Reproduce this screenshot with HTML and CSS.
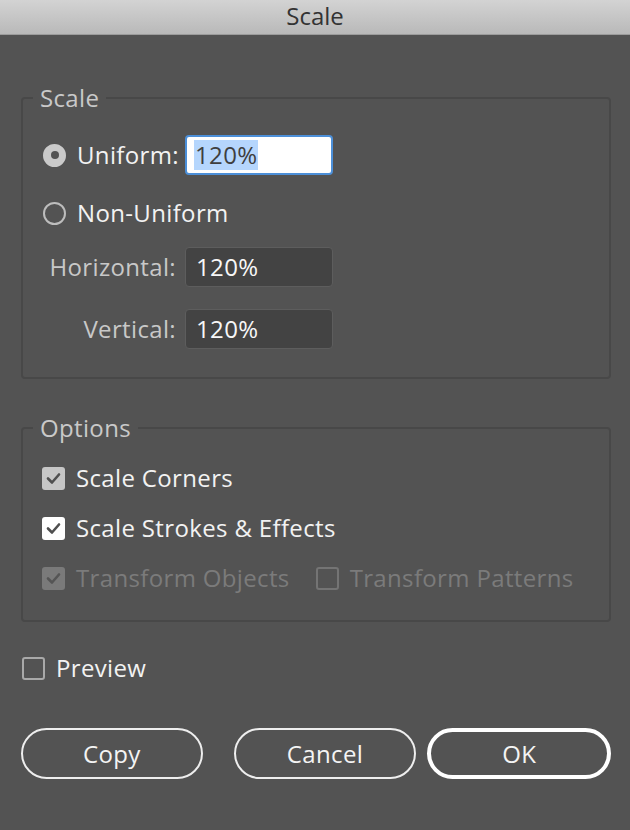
FILE: index.html
```html
<!DOCTYPE html>
<html lang="en">
<head>
<meta charset="utf-8">
<title>Scale</title>
<link rel="stylesheet" href="styles.css">
</head>
<body>
<div class="titlebar">Scale</div>
<div class="content">
  <fieldset class="group group-scale">
    <legend>Scale</legend>
    <div class="row row-uniform">
      <div class="lead">
        <span class="radio checked"></span>
        <span class="label bright">Uniform:</span>
      </div>
      <div class="field focused"><span class="sel">120%</span></div>
    </div>
    <div class="row row-nonuniform">
      <div class="lead">
        <span class="radio"></span>
        <span class="label bright">Non-Uniform</span>
      </div>
    </div>
    <div class="row row-horizontal">
      <div class="lead right"><span class="label dim">Horizontal:</span></div>
      <div class="field">120%</div>
    </div>
    <div class="row row-vertical">
      <div class="lead right"><span class="label dim">Vertical:</span></div>
      <div class="field">120%</div>
    </div>
  </fieldset>

  <fieldset class="group group-options">
    <legend>Options</legend>
    <div class="check-row first">
      <span class="check grey"><svg viewBox="0 0 23 23"><path d="M6 11.5 L10 15.5 L17 7.5"/></svg></span>
      <span class="label bright">Scale Corners</span>
    </div>
    <div class="check-row">
      <span class="check white"><svg viewBox="0 0 23 23"><path d="M6 11.5 L10 15.5 L17 7.5"/></svg></span>
      <span class="label bright">Scale Strokes &amp; Effects</span>
    </div>
    <div class="check-row">
      <span class="check disabled"><svg viewBox="0 0 23 23"><path d="M6 11.5 L10 15.5 L17 7.5"/></svg></span>
      <span class="label off">Transform Objects</span>
      <span class="check empty-off second"></span>
      <span class="label off">Transform Patterns</span>
    </div>
  </fieldset>

  <div class="preview-row">
    <span class="check empty"></span>
    <span class="label bright">Preview</span>
  </div>

  <div class="buttons">
    <button class="btn copy">Copy</button>
    <button class="btn cancel">Cancel</button>
    <button class="btn ok">OK</button>
  </div>
</div>
</body>
</html>
```

FILE: styles.css
```css
html, body {
  margin: 0;
  padding: 0;
}
body {
  background: #535353;
  width: 630px;
  height: 830px;
  overflow: hidden;
  font-family: "Open Sans", "Lato", sans-serif;
  font-size: 24px;
  letter-spacing: 0.35px;
  color: #f0f0f0;
}
.titlebar {
  height: 34px;
  border-bottom: 1px solid #9c9c9c;
  background: linear-gradient(#d3d3d3, #b9b9b9);
  color: #333;
  text-align: center;
  line-height: 32px;
  font-size: 24px;
  letter-spacing: 0;
}
.content {
  padding: 0 19px 0 21px;
}
.group {
  margin: 0;
  padding: 0;
  border: 2px solid #484848;
  border-radius: 4px;
  min-width: 0;
}
.group legend {
  margin-left: 10px;
  padding: 0 7px;
  line-height: 24px;
  height: 24px;
  color: #c9c9c9;
}
.group-scale {
  margin-top: 51px;
  padding-bottom: 28px;
}
.group-options {
  margin-top: 37px;
  padding-bottom: 30px;
}
.row {
  display: flex;
  align-items: center;
  height: 40px;
  padding-left: 20px;
}
.row-uniform { margin-top: 25px; }
.row-nonuniform { margin-top: 18px; }
.row-horizontal { margin-top: 14px; }
.row-vertical { margin-top: 22px; }
.lead {
  width: 133px;
  margin-right: 9px;
  display: flex;
  align-items: center;
  white-space: nowrap;
}
.lead.right {
  justify-content: flex-end;
}
.label {
  line-height: 24px;
  white-space: nowrap;
}
.bright { color: #f2f2f2; }
.dim { color: #c8c8c8; }
.off { color: #7b7b7b; }
.radio {
  flex: none;
  width: 23px;
  height: 23px;
  border-radius: 50%;
  box-sizing: border-box;
  border: 2px solid #bdbdbd;
  margin-right: 11px;
  position: relative;
}
.radio.checked {
  background: #cacaca;
  border-color: #cacaca;
}
.radio.checked::after {
  content: "";
  position: absolute;
  left: 50%;
  top: 50%;
  width: 8px;
  height: 8px;
  margin: -4px 0 0 -4px;
  border-radius: 50%;
  background: #545454;
}
.field {
  flex: none;
  width: 148px;
  height: 40px;
  box-sizing: border-box;
  border: 1px solid #5d5d5d;
  border-radius: 4px;
  background: #434343;
  color: #f7f7f7;
  padding-left: 10px;
  line-height: 38px;
}
.field.focused {
  background: #fff;
  border: 2px solid #4c8fd8;
  padding-left: 7px;
  line-height: 36px;
  color: #3f3f3f;
  display: flex;
  align-items: center;
}
.sel {
  background: #b5d6fd;
  line-height: 30px;
  padding: 0 1px;
}
.check-row {
  display: flex;
  align-items: center;
  height: 24px;
  padding-left: 19px;
  margin-top: 26px;
}
.check {
  flex: none;
  width: 23px;
  height: 23px;
  box-sizing: border-box;
  border-radius: 3px;
  margin-right: 11px;
  display: flex;
}
.check svg {
  width: 23px;
  height: 23px;
}
.check svg path {
  fill: none;
  stroke: #4f4f4f;
  stroke-width: 2.6;
  stroke-linecap: round;
  stroke-linejoin: round;
}
.check.grey { background: #c6c6c6; }
.check.white { background: #ffffff; }
.check.disabled { background: #7a7a7a; }
.check.disabled svg path { stroke: #555; }
.check.empty { border: 2px solid #a9a9a9; }
.check.empty-off { border: 2px solid #747474; }
.check.second { margin-left: 26px; }
.preview-row {
  display: flex;
  align-items: center;
  height: 24px;
  margin-top: 34px;
  padding-left: 1px;
}
.buttons {
  display: flex;
  margin-top: 48px;
}
.btn {
  font: inherit;
  letter-spacing: inherit;
  color: #f4f4f4;
  background: transparent;
  height: 51px;
  box-sizing: border-box;
  border: 2px solid #eeeeee;
  border-radius: 26px;
  padding: 0;
  line-height: 24px;
}
.copy { width: 182px; margin-right: 31px; }
.cancel { width: 183px; margin-right: 11px; }
.ok { width: 184px; border: 4px solid #ffffff; }
```
